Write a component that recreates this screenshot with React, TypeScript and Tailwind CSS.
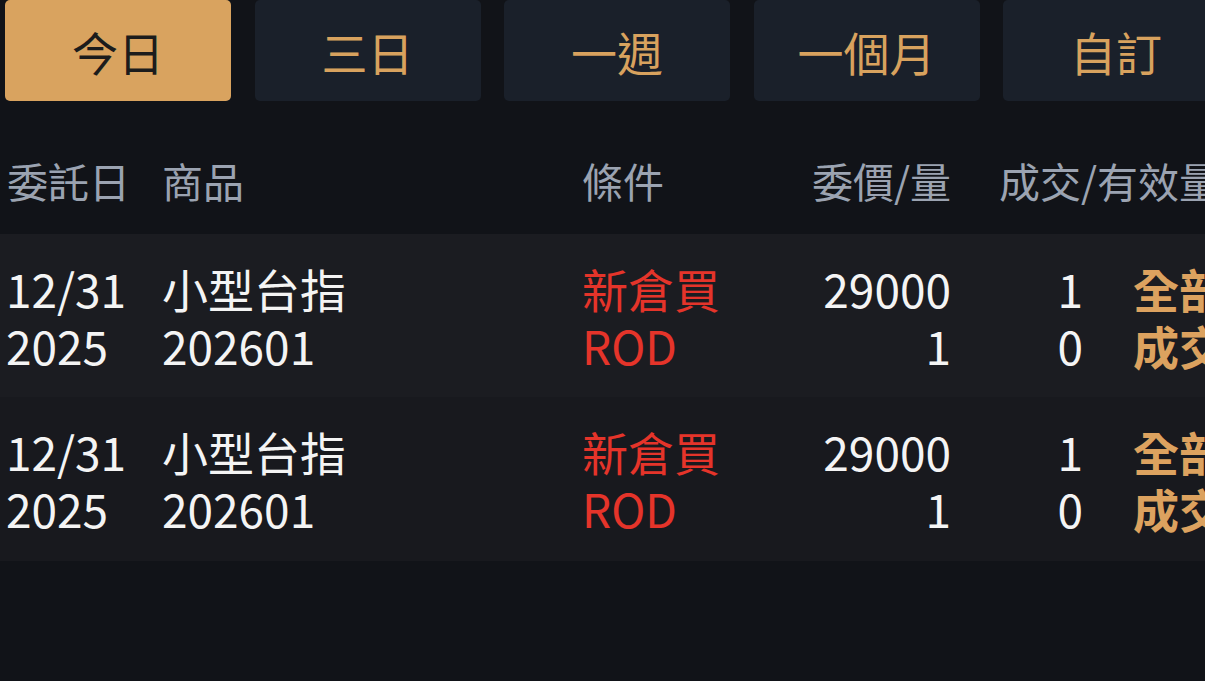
import { useState } from "react";

interface Order {
  date: string;
  year: string;
  name: string;
  code: string;
  side: string;
  cond: string;
  price: string;
  qty: string;
  filled: string;
  valid: string;
  status: [string, string];
}

const ranges = ["今日", "三日", "一週", "一個月", "自訂"];

const orders: Order[] = [
  {
    date: "12/31",
    year: "2025",
    name: "小型台指",
    code: "202601",
    side: "新倉買",
    cond: "ROD",
    price: "29000",
    qty: "1",
    filled: "1",
    valid: "0",
    status: ["全部", "成交"],
  },
  {
    date: "12/31",
    year: "2025",
    name: "小型台指",
    code: "202601",
    side: "新倉買",
    cond: "ROD",
    price: "29000",
    qty: "1",
    filled: "1",
    valid: "0",
    status: ["全部", "成交"],
  },
];

export default function App() {
  const [range, setRange] = useState(0);

  return (
    <div className="w-[1205px] h-[681px] overflow-hidden bg-[#111318] font-['Noto_Sans_CJK_TC','Noto_Sans',sans-serif]">
      {/* Range tabs */}
      <div className="flex gap-[23.5px] pl-[5px]">
        {ranges.map((r, i) => (
          <button
            key={r}
            onClick={() => setRange(i)}
            className={
              i === range
                ? "w-[226px] h-[101px] shrink-0 rounded-[5px] bg-[#d9a35f] text-[#1c1c1c] text-[46px] leading-none"
                : "w-[226px] h-[101px] shrink-0 rounded-[5px] bg-[#1a202a] text-[#d8a25e] text-[46px] leading-none"
            }
          >
            {r}
          </button>
        ))}
      </div>

      {/* Column header */}
      <div className="flex h-[133px] items-center pt-[24px] pl-[7px] text-[41px] leading-[48px] text-[#9ba3b1] whitespace-nowrap">
        <div className="w-[155px] shrink-0">委託日</div>
        <div className="w-[420px] shrink-0">商品</div>
        <div className="w-[190px] shrink-0">條件</div>
        <div className="w-[179px] shrink-0 text-right">委價/量</div>
        <div className="ml-[48px] shrink-0">成交/有效量</div>
      </div>

      {/* Orders */}
      {orders.map((o, i) => (
        <div
          key={i}
          className={
            i % 2 === 0
              ? "flex h-[163px] pt-[26px] pl-[6px] bg-[#1b1c21] text-[46px] leading-[57px] whitespace-nowrap"
              : "flex h-[164px] pt-[26px] pl-[6px] bg-[#18191e] text-[46px] leading-[57px] whitespace-nowrap"
          }
        >
          <div className="w-[156px] shrink-0 text-[#f4f4f4]">
            <div>{o.date}</div>
            <div>{o.year}</div>
          </div>
          <div className="w-[420px] shrink-0 text-[#f4f4f4]">
            <div>{o.name}</div>
            <div>{o.code}</div>
          </div>
          <div className="w-[190px] shrink-0 text-[#e5342a]">
            <div>{o.side}</div>
            <div>{o.cond}</div>
          </div>
          <div className="w-[179px] shrink-0 text-right text-[#f4f4f4]">
            <div>{o.price}</div>
            <div>{o.qty}</div>
          </div>
          <div className="w-[132px] shrink-0 text-right text-[#f4f4f4]">
            <div>{o.filled}</div>
            <div>{o.valid}</div>
          </div>
          <div className="pl-[50px] shrink-0 font-bold text-[#dca25f]">
            <div>{o.status[0]}</div>
            <div>{o.status[1]}</div>
          </div>
        </div>
      ))}
    </div>
  );
}
